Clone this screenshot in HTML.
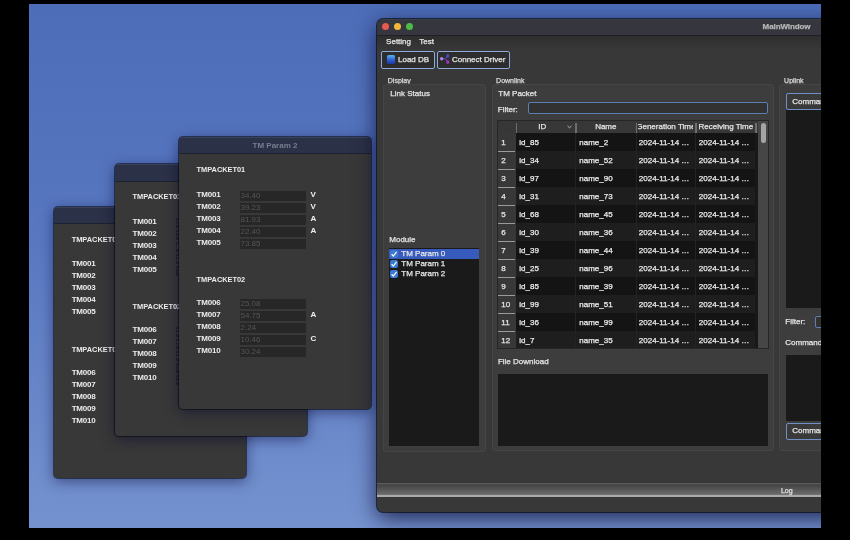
<!DOCTYPE html>
<html><head><meta charset="utf-8"><style>
*{box-sizing:border-box;margin:0;padding:0}
html,body{width:850px;height:540px;background:#000;overflow:hidden;font-family:"Liberation Sans", sans-serif}
#wrap{position:absolute;left:0;top:0;width:850px;height:540px;filter:blur(0.35px)}
.t,.gt,.cell,.rn,.ht{-webkit-text-stroke:0.25px currentColor}
#desk{position:absolute;left:29px;top:4px;width:792px;height:524px;overflow:hidden;
 background:linear-gradient(180deg,#4d6db9 0%,#5877c0 45%,#7592cf 100%)}
.abs{position:absolute}
.tw{position:absolute;width:192px;height:272px;background:#383838;border-radius:4px;overflow:hidden;
 box-shadow:0 0 0 1px rgba(0,0,0,.5),0 3px 14px rgba(0,0,50,.5)}
.twt{position:absolute;left:0;top:0;width:100%;height:17.3px;background:#2b3146;color:#777e90;font-size:8px;font-weight:bold;text-align:center;line-height:17.5px;border-bottom:1px solid #1e2230;box-shadow:inset 0 1px 0 #3a4058}
.pk{position:absolute;left:17.5px;font-size:7.4px;font-weight:bold;color:#ececec;line-height:0;white-space:nowrap}
.tm{position:absolute;left:17.5px;font-size:8px;font-weight:bold;color:#ececec;line-height:0;letter-spacing:-0.2px}
.vb{position:absolute;left:60.5px;width:66px;height:10px;background:#272727;color:#565656;font-size:8px;line-height:10.5px;padding-left:1px}
.un{position:absolute;left:131.5px;font-size:8px;font-weight:bold;color:#f0f0f0;line-height:0}
#mwi{position:absolute;left:0;top:-0.8px;width:820px;height:496px}
#mw{position:absolute;left:348.3px;top:14.8px;width:820px;height:493.6px;background:#383838;border-radius:6px;overflow:hidden;
 box-shadow:0 0 0 1px rgba(0,0,0,.6),0 6px 22px rgba(0,0,40,.75)}
.t{position:absolute;white-space:nowrap;line-height:0;color:#e6e6e6;font-size:8px}
.gt{position:absolute;white-space:nowrap;line-height:0;color:#dcdcdc;font-size:7px}
.gb{position:absolute;background:#3d3d3d;border:1px solid #454545;border-radius:3px}
.blk{position:absolute;background:#1a1a1a}
.btn{position:absolute;background:#2d2d2d;border:1.5px solid #8eaad8;border-radius:2px}
.inp{position:absolute;background:#323232;border:1.4px solid #5f7db5;border-radius:2px}
.tbl{position:absolute;left:121px;top:103px;width:270px;height:226.8px;background:#2a2a2a;overflow:hidden;box-shadow:0 0 0 1px #262626}
.thd{position:absolute;left:0;top:0;width:260px;height:12px;background:#373737}
.vhd{position:absolute;left:0;top:12px;width:18px;height:216px;background:#383838}
.hs{position:absolute;top:1.5px;width:1.3px;height:10px;background:#6e6e6e}
.ht{position:absolute;top:0;height:12px;font-size:8px;color:#e6e6e6;text-align:center;line-height:11.4px}
.sortc{position:absolute;left:69px;top:3px;font-size:7px;color:#bbb;line-height:6px}
.row{position:absolute;left:18px;width:239px;height:18px}
.ro{background:#141414}
.re{background:#1e1e1e}
.rn{position:absolute;left:3px;font-size:8px;color:#e6e6e6;line-height:19.5px}
.rsep{position:absolute;left:0;width:17px;height:1px;background:#9a9a9a}
.cell{position:absolute;font-size:8px;color:#ececec;line-height:19.5px;white-space:nowrap}
.cline{position:absolute;top:12px;width:1px;height:216px;background:#232323}
.sbar{position:absolute;left:260px;top:0;width:10px;height:228px;background:#464646}
.sgap{position:absolute;left:257px;top:12px;width:3px;height:216px;background:#181818}
.sthumb{position:absolute;left:262.5px;top:2px;width:5.3px;height:20.3px;background:#a4a4a4;border-radius:3px}
</style></head><body><div id="wrap">
<div id="desk">
<div class="tw" style="left:25.200000000000003px;top:202.9px;height:271px">
<div class="twt">TM Param 0</div>
<div class="pk" style="top:32.8px">TMPACKET01</div>
<div class="tm" style="top:57.6px">TM001</div>
<div class="vb" style="top:54px">34.40</div>
<div class="un" style="top:57.6px">V</div>
<div class="tm" style="top:69.6px">TM002</div>
<div class="vb" style="top:66px">39.23</div>
<div class="un" style="top:69.6px">V</div>
<div class="tm" style="top:81.6px">TM003</div>
<div class="vb" style="top:78px">81.93</div>
<div class="un" style="top:81.6px">A</div>
<div class="tm" style="top:93.6px">TM004</div>
<div class="vb" style="top:90px">22.40</div>
<div class="un" style="top:93.6px">A</div>
<div class="tm" style="top:105.6px">TM005</div>
<div class="vb" style="top:102px">73.85</div>
<div class="pk" style="top:143px">TMPACKET02</div>
<div class="tm" style="top:165.8px">TM006</div>
<div class="vb" style="top:162.3px">25.08</div>
<div class="tm" style="top:177.8px">TM007</div>
<div class="vb" style="top:174.3px">54.75</div>
<div class="un" style="top:177.8px">A</div>
<div class="tm" style="top:189.8px">TM008</div>
<div class="vb" style="top:186.3px">2.24</div>
<div class="tm" style="top:201.8px">TM009</div>
<div class="vb" style="top:198.3px">10.46</div>
<div class="un" style="top:201.8px">C</div>
<div class="tm" style="top:213.8px">TM010</div>
<div class="vb" style="top:210.3px">30.24</div>
</div>
<div class="tw" style="left:86px;top:160.4px;height:272px">
<div class="twt">TM Param 1</div>
<div class="pk" style="top:32.8px">TMPACKET01</div>
<div class="tm" style="top:57.6px">TM001</div>
<div class="vb" style="top:54px">34.40</div>
<div class="un" style="top:57.6px">V</div>
<div class="tm" style="top:69.6px">TM002</div>
<div class="vb" style="top:66px">39.23</div>
<div class="un" style="top:69.6px">V</div>
<div class="tm" style="top:81.6px">TM003</div>
<div class="vb" style="top:78px">81.93</div>
<div class="un" style="top:81.6px">A</div>
<div class="tm" style="top:93.6px">TM004</div>
<div class="vb" style="top:90px">22.40</div>
<div class="un" style="top:93.6px">A</div>
<div class="tm" style="top:105.6px">TM005</div>
<div class="vb" style="top:102px">73.85</div>
<div class="pk" style="top:143px">TMPACKET02</div>
<div class="tm" style="top:165.8px">TM006</div>
<div class="vb" style="top:162.3px">25.08</div>
<div class="tm" style="top:177.8px">TM007</div>
<div class="vb" style="top:174.3px">54.75</div>
<div class="un" style="top:177.8px">A</div>
<div class="tm" style="top:189.8px">TM008</div>
<div class="vb" style="top:186.3px">2.24</div>
<div class="tm" style="top:201.8px">TM009</div>
<div class="vb" style="top:198.3px">10.46</div>
<div class="un" style="top:201.8px">C</div>
<div class="tm" style="top:213.8px">TM010</div>
<div class="vb" style="top:210.3px">30.24</div>
</div>
<div class="tw" style="left:150px;top:133px;height:272px">
<div class="twt">TM Param 2</div>
<div class="pk" style="top:32.8px">TMPACKET01</div>
<div class="tm" style="top:57.6px">TM001</div>
<div class="vb" style="top:54px">34.40</div>
<div class="un" style="top:57.6px">V</div>
<div class="tm" style="top:69.6px">TM002</div>
<div class="vb" style="top:66px">39.23</div>
<div class="un" style="top:69.6px">V</div>
<div class="tm" style="top:81.6px">TM003</div>
<div class="vb" style="top:78px">81.93</div>
<div class="un" style="top:81.6px">A</div>
<div class="tm" style="top:93.6px">TM004</div>
<div class="vb" style="top:90px">22.40</div>
<div class="un" style="top:93.6px">A</div>
<div class="tm" style="top:105.6px">TM005</div>
<div class="vb" style="top:102px">73.85</div>
<div class="pk" style="top:143px">TMPACKET02</div>
<div class="tm" style="top:165.8px">TM006</div>
<div class="vb" style="top:162.3px">25.08</div>
<div class="tm" style="top:177.8px">TM007</div>
<div class="vb" style="top:174.3px">54.75</div>
<div class="un" style="top:177.8px">A</div>
<div class="tm" style="top:189.8px">TM008</div>
<div class="vb" style="top:186.3px">2.24</div>
<div class="tm" style="top:201.8px">TM009</div>
<div class="vb" style="top:198.3px">10.46</div>
<div class="un" style="top:201.8px">C</div>
<div class="tm" style="top:213.8px">TM010</div>
<div class="vb" style="top:210.3px">30.24</div>
</div>
<div id="mw"><div id="mwi">
 <div class="abs" style="left:0;top:0;width:820px;height:17.5px;background:#35363e;border-bottom:1px solid #1f1f24;box-shadow:inset 0 1.5px 0 #45464e"></div>
 <div class="abs" style="left:0;top:17.5px;width:820px;height:14px;background:linear-gradient(180deg,#2e2e2e,#383838)"></div>
 <div class="abs" style="left:4.6px;top:5px;width:7.4px;height:7.4px;border-radius:50%;background:#e65a50"></div>
 <div class="abs" style="left:16.6px;top:5px;width:7.4px;height:7.4px;border-radius:50%;background:#f2b63a"></div>
 <div class="abs" style="left:28.7px;top:5px;width:7.4px;height:7.4px;border-radius:50%;background:#4cbb46"></div>
 <div class="t" style="left:385.3px;top:9px;font-weight:bold;color:#b6b6b6;letter-spacing:-0.1px">MainWindow</div>
 <div class="t" style="left:8.8px;top:23.5px">Setting</div>
 <div class="t" style="left:42px;top:23.5px">Test</div>
 <div class="btn" style="left:3.4px;top:32.5px;width:54px;height:18px"></div>
 <div class="abs" style="left:9.6px;top:37px;width:8.4px;height:9px;border-radius:1.5px;background:linear-gradient(180deg,#5ab0f0,#2a5ad0 60%,#1a3aa0)"></div>
 <div class="t" style="left:20.7px;top:41.5px">Load DB</div>
 <div class="btn" style="left:60.2px;top:32.5px;width:73px;height:18px"></div>
 <svg class="abs" style="left:62px;top:35px" width="14" height="12" viewBox="0 0 14 12">
  <path d="M2.7 5.8 L6.6 5.9 L8.8 2.8 M6.6 5.9 L8.8 9.2" stroke="#7040c0" stroke-width="1" fill="none"/>
  <circle cx="2.7" cy="5.8" r="1.7" fill="#a888e0"/>
  <ellipse cx="8.8" cy="2.9" rx="1.5" ry="1.8" fill="#4550c8"/>
  <ellipse cx="8.8" cy="9.1" rx="1.6" ry="1.9" fill="#9a35c0"/>
 </svg>
 <div class="t" style="left:74.7px;top:41.5px">Connect Driver</div>

 <div class="gt" style="left:10.5px;top:62.5px">Display</div>
 <div class="gb" style="left:5.8px;top:65.8px;width:103.4px;height:368.2px"></div>
 <div class="t" style="left:13px;top:76.2px">Link Status</div>
 <div class="t" style="left:12px;top:221.7px">Module</div>
 <div class="blk" style="left:11.6px;top:230px;width:90px;height:198px;background:#1a1a1a"></div>
 <div class="abs" style="left:11.6px;top:230.8px;width:90px;height:10px;background:#365bbd"></div>
 <div class="abs" style="left:13.1px;top:232px;width:8px;height:8.3px;border-radius:2px;background:#3b78d2"></div><svg class="abs" style="left:13.1px;top:232px" width="8" height="8" viewBox="0 0 8 8"><path d="M1.6 4.2 L3.3 6 L6.6 1.8" stroke="#fff" stroke-width="1.2" fill="none"/></svg><div class="t" style="left:24px;top:236.1px;font-size:8px">TM Param 0</div><div class="abs" style="left:13.1px;top:242px;width:8px;height:8.3px;border-radius:2px;background:#3b78d2"></div><svg class="abs" style="left:13.1px;top:242px" width="8" height="8" viewBox="0 0 8 8"><path d="M1.6 4.2 L3.3 6 L6.6 1.8" stroke="#fff" stroke-width="1.2" fill="none"/></svg><div class="t" style="left:24px;top:246.1px;font-size:8px">TM Param 1</div><div class="abs" style="left:13.1px;top:252px;width:8px;height:8.3px;border-radius:2px;background:#3b78d2"></div><svg class="abs" style="left:13.1px;top:252px" width="8" height="8" viewBox="0 0 8 8"><path d="M1.6 4.2 L3.3 6 L6.6 1.8" stroke="#fff" stroke-width="1.2" fill="none"/></svg><div class="t" style="left:24px;top:256.1px;font-size:8px">TM Param 2</div>
 <div class="gt" style="left:118.8px;top:62.5px">Downlink</div>
 <div class="gb" style="left:114.5px;top:65.8px;width:282.2px;height:367.7px"></div>
 <div class="t" style="left:121px;top:75.5px">TM Packet</div>
 <div class="t" style="left:120.5px;top:91.5px">Filter:</div>
 <div class="inp" style="left:150.5px;top:84px;width:240.5px;height:12.2px"></div>
 <div class="tbl">
<div class="thd"></div>
<div class="vhd"></div>
<div class="hs" style="left:17.5px"></div><div class="hs" style="left:77px"></div><div class="hs" style="left:137.5px"></div><div class="hs" style="left:197px"></div><div class="hs" style="left:257px"></div>
<div class="ht" style="left:18px;width:52px">ID</div>
<svg style="position:absolute;left:68.8px;top:4.0px" width="5" height="4" viewBox="0 0 5 4"><path d="M0.6 1 L2.5 2.8 L4.4 1" stroke="#c8c8c8" stroke-width="0.9" fill="none"/></svg>
<div class="ht" style="left:78px;width:59px">Name</div>
<div class="ht" style="left:140px;width:55px;overflow:hidden;white-space:nowrap;display:flex;justify-content:center"><span>Generation Time</span></div>
<div class="ht" style="left:198px;width:59px;white-space:nowrap;overflow:hidden">Receiving Time</div>
<div class="row ro" style="top:12px"></div>
<div class="rn" style="top:12px">1</div>
<div class="rsep" style="top:30px"></div>
<div class="cell" style="top:12px;left:21px">id_85</div>
<div class="cell" style="top:12px;left:81px">name_2</div>
<div class="cell" style="top:12px;left:140.5px">2024-11-14 &#8230;</div>
<div class="cell" style="top:12px;left:200.5px">2024-11-14 &#8230;</div>
<div class="row re" style="top:30px"></div>
<div class="rn" style="top:30px">2</div>
<div class="rsep" style="top:48px"></div>
<div class="cell" style="top:30px;left:21px">id_34</div>
<div class="cell" style="top:30px;left:81px">name_52</div>
<div class="cell" style="top:30px;left:140.5px">2024-11-14 &#8230;</div>
<div class="cell" style="top:30px;left:200.5px">2024-11-14 &#8230;</div>
<div class="row ro" style="top:48px"></div>
<div class="rn" style="top:48px">3</div>
<div class="rsep" style="top:66px"></div>
<div class="cell" style="top:48px;left:21px">id_97</div>
<div class="cell" style="top:48px;left:81px">name_90</div>
<div class="cell" style="top:48px;left:140.5px">2024-11-14 &#8230;</div>
<div class="cell" style="top:48px;left:200.5px">2024-11-14 &#8230;</div>
<div class="row re" style="top:66px"></div>
<div class="rn" style="top:66px">4</div>
<div class="rsep" style="top:84px"></div>
<div class="cell" style="top:66px;left:21px">id_31</div>
<div class="cell" style="top:66px;left:81px">name_73</div>
<div class="cell" style="top:66px;left:140.5px">2024-11-14 &#8230;</div>
<div class="cell" style="top:66px;left:200.5px">2024-11-14 &#8230;</div>
<div class="row ro" style="top:84px"></div>
<div class="rn" style="top:84px">5</div>
<div class="rsep" style="top:102px"></div>
<div class="cell" style="top:84px;left:21px">id_68</div>
<div class="cell" style="top:84px;left:81px">name_45</div>
<div class="cell" style="top:84px;left:140.5px">2024-11-14 &#8230;</div>
<div class="cell" style="top:84px;left:200.5px">2024-11-14 &#8230;</div>
<div class="row re" style="top:102px"></div>
<div class="rn" style="top:102px">6</div>
<div class="rsep" style="top:120px"></div>
<div class="cell" style="top:102px;left:21px">id_30</div>
<div class="cell" style="top:102px;left:81px">name_36</div>
<div class="cell" style="top:102px;left:140.5px">2024-11-14 &#8230;</div>
<div class="cell" style="top:102px;left:200.5px">2024-11-14 &#8230;</div>
<div class="row ro" style="top:120px"></div>
<div class="rn" style="top:120px">7</div>
<div class="rsep" style="top:138px"></div>
<div class="cell" style="top:120px;left:21px">id_39</div>
<div class="cell" style="top:120px;left:81px">name_44</div>
<div class="cell" style="top:120px;left:140.5px">2024-11-14 &#8230;</div>
<div class="cell" style="top:120px;left:200.5px">2024-11-14 &#8230;</div>
<div class="row re" style="top:138px"></div>
<div class="rn" style="top:138px">8</div>
<div class="rsep" style="top:156px"></div>
<div class="cell" style="top:138px;left:21px">id_25</div>
<div class="cell" style="top:138px;left:81px">name_96</div>
<div class="cell" style="top:138px;left:140.5px">2024-11-14 &#8230;</div>
<div class="cell" style="top:138px;left:200.5px">2024-11-14 &#8230;</div>
<div class="row ro" style="top:156px"></div>
<div class="rn" style="top:156px">9</div>
<div class="rsep" style="top:174px"></div>
<div class="cell" style="top:156px;left:21px">id_85</div>
<div class="cell" style="top:156px;left:81px">name_39</div>
<div class="cell" style="top:156px;left:140.5px">2024-11-14 &#8230;</div>
<div class="cell" style="top:156px;left:200.5px">2024-11-14 &#8230;</div>
<div class="row re" style="top:174px"></div>
<div class="rn" style="top:174px">10</div>
<div class="rsep" style="top:192px"></div>
<div class="cell" style="top:174px;left:21px">id_99</div>
<div class="cell" style="top:174px;left:81px">name_51</div>
<div class="cell" style="top:174px;left:140.5px">2024-11-14 &#8230;</div>
<div class="cell" style="top:174px;left:200.5px">2024-11-14 &#8230;</div>
<div class="row ro" style="top:192px"></div>
<div class="rn" style="top:192px">11</div>
<div class="rsep" style="top:210px"></div>
<div class="cell" style="top:192px;left:21px">id_36</div>
<div class="cell" style="top:192px;left:81px">name_99</div>
<div class="cell" style="top:192px;left:140.5px">2024-11-14 &#8230;</div>
<div class="cell" style="top:192px;left:200.5px">2024-11-14 &#8230;</div>
<div class="row re" style="top:210px"></div>
<div class="rn" style="top:210px">12</div>
<div class="cell" style="top:210px;left:21px">id_7</div>
<div class="cell" style="top:210px;left:81px">name_35</div>
<div class="cell" style="top:210px;left:140.5px">2024-11-14 &#8230;</div>
<div class="cell" style="top:210px;left:200.5px">2024-11-14 &#8230;</div>
<div class="cline" style="left:77px"></div><div class="cline" style="left:137.5px"></div><div class="cline" style="left:197px"></div>
<div class="sgap"></div><div class="sbar"></div><div class="sthumb"></div>
</div>
 <div class="t" style="left:120.6px;top:344px">File Download</div>
 <div class="blk" style="left:121px;top:355.7px;width:270px;height:72.3px"></div>

 <div class="gt" style="left:406.8px;top:62.5px">Uplink</div>
 <div class="gb" style="left:402px;top:65.8px;width:100px;height:367.7px"></div>
 <div class="btn" style="left:409px;top:75.4px;width:80px;height:16.2px;border-width:1.2px;background:#3a3a3a;border-color:#6f8fc8"></div>
 <div class="t" style="left:415px;top:83.5px">Command</div>
 <div class="blk" style="left:408.5px;top:92px;width:80px;height:197.6px"></div>
 <div class="t" style="left:408px;top:303.5px">Filter:</div>
 <div class="inp" style="left:438px;top:298.3px;width:50px;height:12px"></div>
 <div class="t" style="left:408px;top:325.3px">Command</div>
 <div class="blk" style="left:408.5px;top:337px;width:80px;height:66px"></div>
 <div class="btn" style="left:409px;top:404.7px;width:80px;height:17px;border-width:1.2px;background:#3a3a3a;border-color:#6f8fc8"></div>
 <div class="t" style="left:415px;top:413.2px">Command</div>

 <div class="abs" style="left:0;top:465.3px;width:820px;height:14.5px;background:linear-gradient(180deg,#5c5c5c 0px,#5c5c5c 1px,#444 1.6px,#4c4c4c 4px,#6a6a6a 11px,#7a7a7a 12px,#b4b4b4 12.6px,#a8a8a8 13.8px,#363636 14.5px)"></div>
 <div class="t" style="left:403.6px;top:473px;font-size:7px;color:#e0e0e0">Log</div>
</div></div>
</div></div>
</body></html>
